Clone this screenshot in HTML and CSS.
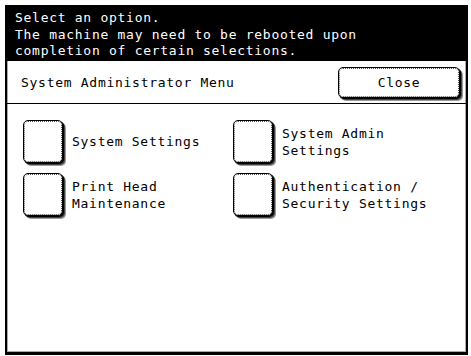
FILE: index.html
```html
<!DOCTYPE html>
<html>
<head>
<meta charset="utf-8">
<link rel="stylesheet" href="styles.css">
</head>
<body>
<div class="screen">
  <div class="header">
    <div>Select an option.</div>
    <div>The machine may need to be rebooted upon</div>
    <div>completion of certain selections.</div>
  </div>
  <div class="panel">
    <div class="titlebar">
      <span class="title">System Administrator Menu</span>
      <button class="btn close">Close</button>
    </div>
    <div class="menu">
      <div class="item"><span class="btn square"></span><span class="label">System Settings</span></div>
      <div class="item"><span class="btn square"></span><span class="label">System Admin<br>Settings</span></div>
      <div class="item"><span class="btn square"></span><span class="label">Print Head<br>Maintenance</span></div>
      <div class="item"><span class="btn square"></span><span class="label">Authentication /<br>Security Settings</span></div>
    </div>
  </div>
</div>
</body>
</html>
```
FILE: styles.css
```css
* { box-sizing: border-box; }
body {
  margin: 0;
  background: #fff;
  font-family: "DejaVu Sans Mono", "Liberation Mono", monospace;
  font-size: 13px;
  letter-spacing: 0.72px;
  color: #000;
}
.screen {
  margin: 5px 0 0 5px;
  width: 463px;
}
.header {
  background: #000;
  color: #fff;
  height: 56px;
  padding: 5px 0 0 10px;
  line-height: 16.7px;
}
.panel {
  height: 294px;
  border-left: 2px solid #000;
  border-right: 2px solid #000;
  border-bottom: 3px solid #000;
  box-shadow: inset 1px 0 0 #aaa, inset -1px 0 0 #aaa, inset 0 -1px 0 #aaa;
  display: flex;
  flex-direction: column;
}
.titlebar {
  height: 43px;
  border-bottom: 1px solid #000;
  display: flex;
  align-items: center;
  justify-content: space-between;
  padding: 1px 6px 0 14px;
}
.btn {
  background: #fff;
  border: 1px solid #000;
  border-radius: 5px;
  box-shadow: 1px 1px 0 #000, 2px 2px 0 #444, 3px 3px 0 #999;
  outline: 1px dotted #555;
  outline-offset: -2px;
}
.close {
  width: 122px;
  height: 31px;
  font: inherit;
  letter-spacing: inherit;
  color: #000;
  padding: 0;
  margin-top: 0;
}
.menu {
  display: grid;
  grid-template-columns: 210px 210px;
  row-gap: 10px;
  padding: 16px 0 0 16px;
}
.item {
  display: flex;
  align-items: center;
  gap: 9px;
  height: 43px;
}
.square {
  display: block;
  flex: none;
  width: 40px;
  height: 43px;
}
.label {
  line-height: 17px;
}
```
